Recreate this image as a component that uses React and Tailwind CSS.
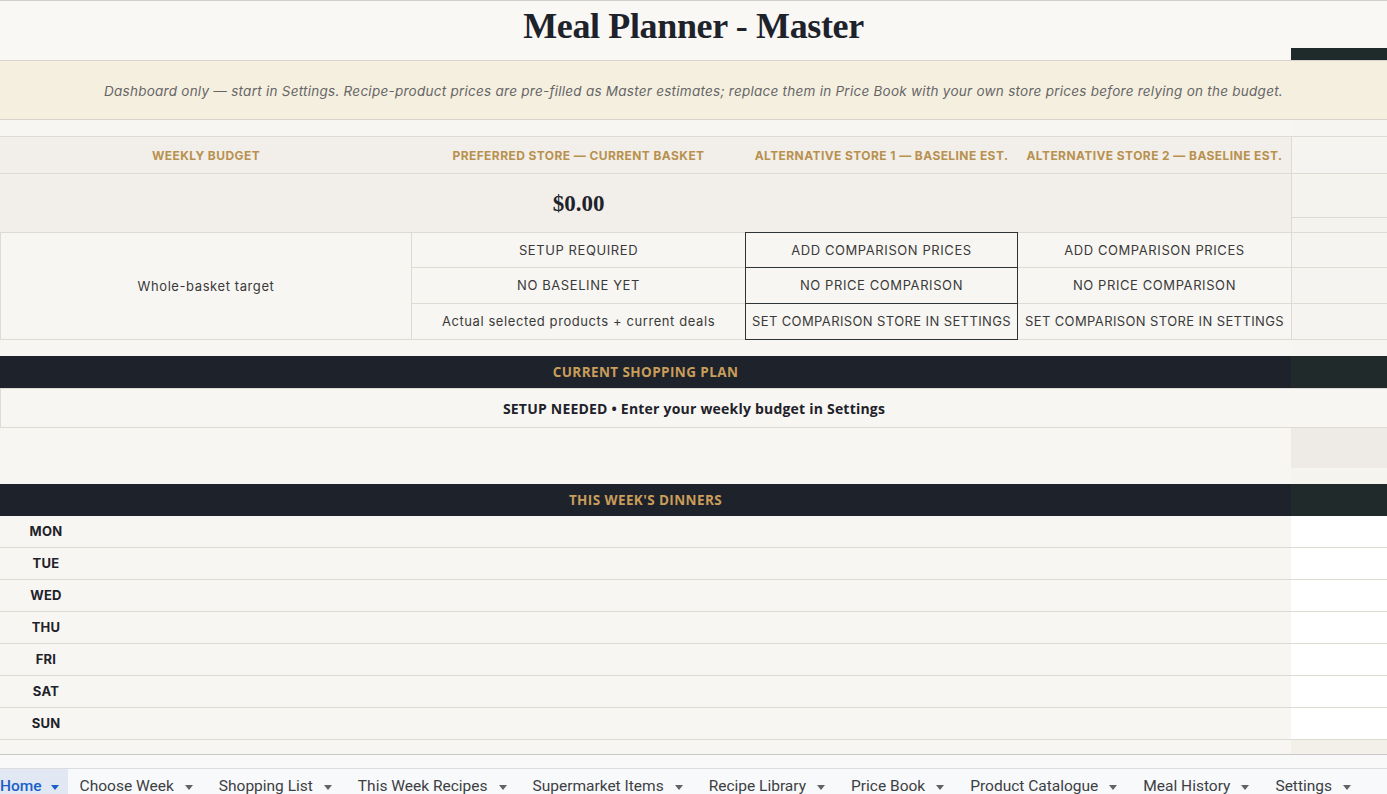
const gold = "text-[#b8914f] font-bold text-[12px] tracking-[0.035em] uppercase";
const cellText = "text-[13px] text-[#3a3a3a] tracking-[0.045em]";

function Tri() {
  return (
    <svg width="8" height="5" viewBox="0 0 8 5" className="shrink-0">
      <path d="M0 0 L8 0 L4 5 Z" fill="currentColor" />
    </svg>
  );
}

const tabs = [
  "Choose Week",
  "Shopping List",
  "This Week Recipes",
  "Supermarket Items",
  "Recipe Library",
  "Price Book",
  "Product Catalogue",
  "Meal History",
  "Settings",
];

const days = ["MON", "TUE", "WED", "THU", "FRI", "SAT", "SUN"];

export default function App() {
  return (
    <div className="w-[1387px] h-[794px] overflow-hidden bg-[#f8f6f2] flex flex-col font-['Inter',sans-serif] text-[#333]">
      {/* Title row */}
      <div className="h-[60px] shrink-0 border-t border-[#cfcfcf] bg-[#f9f8f5] flex flex-col">
        <div className="h-[47px] pt-[2px] flex items-center justify-center font-['Liberation_Serif',serif] font-bold text-[36px] tracking-[-0.01em] text-[#1e222b]">
          Meal Planner - Master
        </div>
        <div className="self-end w-[96px] h-[12px] bg-[#1f2a2b]" />
      </div>

      {/* Banner */}
      <div className="h-[60px] shrink-0 border-y border-[#d8d4cb] bg-[#f5efe0] flex items-center justify-center">
        <span className="italic text-[13.5px] text-[#666] tracking-[0.019em] pt-[2px]">
          Dashboard only — start in Settings. Recipe-product prices are pre-filled as Master estimates; replace them in Price Book with your own store prices before relying on the budget.
        </span>
      </div>

      {/* spacer */}
      <div className="h-[16px] shrink-0 flex">
        <div className="flex-1" />
        <div className="w-[96px] bg-[#f6f5f1]" />
      </div>

      {/* Summary table */}
      <div className="grid shrink-0 grid-cols-[412px_333px_273px_273px_96px] grid-rows-[38px_58px_36px_36px_36px]">
        {/* header row */}
        <div className={`bg-[#f2efea] border-y border-[#dedbd5] flex items-center justify-center pt-px ${gold}`}>Weekly Budget</div>
        <div className={`bg-[#f2efea] border-y border-[#dedbd5] flex items-center justify-center pt-px ${gold}`}>Preferred Store — Current Basket</div>
        <div className={`bg-[#f2efea] border-y border-[#dedbd5] flex items-center justify-center pt-px ${gold}`}>Alternative Store 1 — Baseline Est.</div>
        <div className={`bg-[#f2efea] border-y border-[#dedbd5] flex items-center justify-center pt-px ${gold}`}>Alternative Store 2 — Baseline Est.</div>
        <div className="bg-[#f6f4f0] border-y border-l border-[#dedbd5]" />

        {/* value row */}
        <div className="bg-[#f2efea]" />
        <div className="bg-[#f2efea] flex items-center justify-center pt-[3px] font-['Liberation_Serif',serif] font-bold text-[23px] text-[#1e222b]">
          $0.00
        </div>
        <div className="bg-[#f2efea]" />
        <div className="bg-[#f2efea]" />
        <div className="bg-[#f5f3ee] border-l border-[#dedbd5] flex flex-col">
          <div className="h-[44px] border-b border-[#dedbd5]" />
          <div className="flex-1" />
        </div>

        {/* detail rows */}
        <div className={`row-span-3 border-x border-y border-[#dedbd5] bg-[#f8f6f2] flex items-center justify-center pt-px ${cellText}`}>
          Whole-basket target
        </div>
        <div className={`border-b border-t border-[#dedbd5] flex items-center justify-center pt-px ${cellText}`}>SETUP REQUIRED</div>
        <div className={`border border-[#2e3436] flex items-center justify-center pt-px ${cellText}`}>ADD COMPARISON PRICES</div>
        <div className={`border-b border-t border-[#dedbd5] flex items-center justify-center pt-px ${cellText}`}>ADD COMPARISON PRICES</div>
        <div className="border-b border-t border-l border-[#dedbd5] bg-[#f6f4f0]" />

        <div className={`border-b border-[#dedbd5] flex items-center justify-center pt-px ${cellText}`}>NO BASELINE YET</div>
        <div className={`border-x border-b border-[#2e3436] flex items-center justify-center pt-px ${cellText}`}>NO PRICE COMPARISON</div>
        <div className={`border-b border-[#dedbd5] flex items-center justify-center pt-px ${cellText}`}>NO PRICE COMPARISON</div>
        <div className="border-b border-l border-[#dedbd5] bg-[#f6f4f0]" />

        <div className={`border-b border-[#dedbd5] flex items-center justify-center pt-px ${cellText}`}>Actual selected products + current deals</div>
        <div className="border-x border-b border-[#2e3436] flex items-center justify-center pt-px whitespace-nowrap text-[13px] text-[#3a3a3a] tracking-[0.03em]">SET COMPARISON STORE IN SETTINGS</div>
        <div className="border-b border-[#dedbd5] flex items-center justify-center pt-px whitespace-nowrap text-[13px] text-[#3a3a3a] tracking-[0.03em]">SET COMPARISON STORE IN SETTINGS</div>
        <div className="border-b border-l border-[#dedbd5] bg-[#f6f4f0]" />
      </div>

      {/* spacer */}
      <div className="h-[16px] shrink-0 flex">
        <div className="flex-1" />
        <div className="w-[96px] bg-[#f6f5f1]" />
      </div>

      {/* Current shopping plan bar */}
      <div className="h-[32px] shrink-0 flex">
        <div className="flex-1 bg-[#1e222b] flex items-center justify-center pt-px font-['Open_Sans',sans-serif] font-bold text-[13.5px] tracking-[0.03em] text-[#c99d5a]">
          CURRENT SHOPPING PLAN
        </div>
        <div className="w-[96px] bg-[#212a2a]" />
      </div>

      {/* setup needed */}
      <div className="h-[40px] shrink-0 border-l border-b border-t border-[#dedbd5] bg-[#f8f6f2] flex items-center justify-center pt-px font-['Open_Sans',sans-serif] font-bold text-[14px] tracking-[0.015em] text-[#1e222b]">
        SETUP NEEDED • Enter your weekly budget in Settings
      </div>

      <div className="h-[40px] shrink-0 flex">
        <div className="flex-1" />
        <div className="w-[96px] bg-[#eeebe6]" />
      </div>
      <div className="h-[16px] shrink-0 flex">
        <div className="flex-1" />
        <div className="w-[96px] bg-[#f6f4ef]" />
      </div>

      {/* dinners bar */}
      <div className="h-[32px] shrink-0 flex">
        <div className="flex-1 bg-[#1e222b] flex items-center justify-center pt-px font-['Open_Sans',sans-serif] font-bold text-[13.5px] tracking-[0.03em] text-[#c99d5a]">
          THIS WEEK'S DINNERS
        </div>
        <div className="w-[96px] bg-[#212a2a]" />
      </div>

      {/* days */}
      <div className="flex flex-col shrink-0">
        {days.map((d) => (
          <div key={d} className="h-[32px] flex border-b border-[#dedbd5]">
            <div className="flex-1 flex items-center pt-px">
              <div className="w-[92px] text-center font-bold text-[13px] text-[#1e222b] tracking-[0.02em]">{d}</div>
            </div>
            <div className="w-[96px] bg-white" />
          </div>
        ))}
      </div>

      <div className="h-[15px] shrink-0 flex border-b border-[#c9c9c9]">
        <div className="flex-1" />
        <div className="w-[96px] bg-[#f3f0ea]" />
      </div>

      <div className="h-[13px] shrink-0 bg-[#f9f9f9]" />

      {/* sheet tabs */}
      <div className="flex-1 border-t border-[#dadce0] bg-[#f8f9fa] flex items-start font-['Roboto',sans-serif] text-[15.5px] text-[#3c4043]">
        <div className="h-[36px] -ml-[13px] pl-[13px] pr-[9px] bg-[#e1e8f3] flex items-center gap-[9px] text-[#1a5fc8] font-medium">
          <span>Home</span>
          <Tri />
        </div>
        {tabs.map((t) => (
          <div key={t} className="h-[36px] pl-[12px] pr-[14px] flex items-center gap-[11px]">
            <span>{t}</span>
            <span className="text-[#5f6368]"><Tri /></span>
          </div>
        ))}
      </div>
    </div>
  );
}
